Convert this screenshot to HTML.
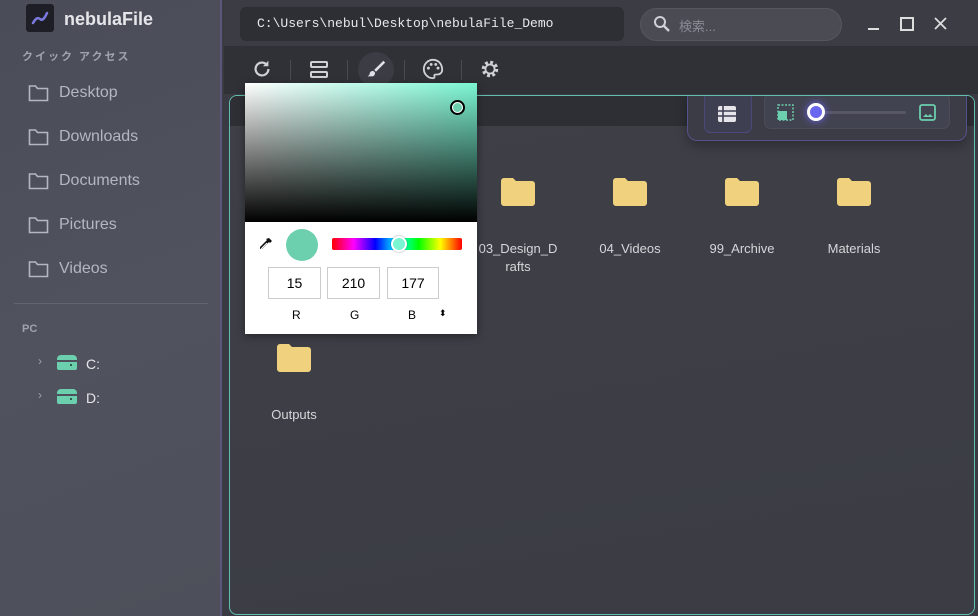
<!DOCTYPE html>
<html><head><meta charset="utf-8"><style>
*{margin:0;padding:0;box-sizing:border-box}
body{width:978px;height:616px;overflow:hidden;background:#3a3b42;font-family:"Liberation Sans","Noto Sans CJK JP",sans-serif;position:relative}
.abs{position:absolute}
#side{left:0;top:0;width:222px;height:616px;background:linear-gradient(160deg,#4a4c58,#50525e 50%,#4d4f5a);border-right:2px solid #5a587a}
.nav{left:28px;font-size:16px;color:#b4b6c0;display:flex;align-items:center;gap:10px}
.nav svg{width:21px;height:18px}
#top{left:224px;top:0;width:754px;height:46px;background:#3c3d44}
#tool{left:224px;top:46px;width:754px;height:48px;background:#303137}
#panel{left:229px;top:95px;width:746px;height:520px;border:1px solid #62bfae;border-radius:8px;background:linear-gradient(170deg,#3e3f47,#3c3d44);overflow:hidden}
.fold{position:absolute;width:112px;text-align:center;color:#d6d6da;font-size:13px;line-height:18px}
.fold svg{display:block;margin:0 auto 34px}
.tb{top:58px;width:22px;height:22px}
.sep{top:60px;width:1px;height:20px;background:#4a4b52}
</style></head><body>
<div id="side" class="abs">
 <div class="abs" style="left:26px;top:4px;width:28px;height:28px;background:#1e1f26;border-radius:3px">
  <svg width="28" height="28"><path d="M7 19 Q11 12 14 15 T21 9" stroke="#7b79e0" stroke-width="2.5" fill="none" stroke-linecap="round"/></svg></div>
 <div class="abs" style="left:64px;top:9px;font-size:18px;color:#e6e6ea;font-weight:bold">nebulaFile</div>
 <div class="abs" style="left:22px;top:48px;font-size:11px;color:#a0a2ac;font-weight:bold;letter-spacing:2px">クイック アクセス</div>
 <div class="abs nav" style="top:84px"><svg viewBox="0 0 21 18"><path d="M1.5 2h6l2 2.5h10v12h-18z" fill="none" stroke="#b4b6c0" stroke-width="1.6"/></svg>Desktop</div>
 <div class="abs nav" style="top:128px"><svg viewBox="0 0 21 18"><path d="M1.5 2h6l2 2.5h10v12h-18z" fill="none" stroke="#b4b6c0" stroke-width="1.6"/></svg>Downloads</div>
 <div class="abs nav" style="top:172px"><svg viewBox="0 0 21 18"><path d="M1.5 2h6l2 2.5h10v12h-18z" fill="none" stroke="#b4b6c0" stroke-width="1.6"/></svg>Documents</div>
 <div class="abs nav" style="top:216px"><svg viewBox="0 0 21 18"><path d="M1.5 2h6l2 2.5h10v12h-18z" fill="none" stroke="#b4b6c0" stroke-width="1.6"/></svg>Pictures</div>
 <div class="abs nav" style="top:260px"><svg viewBox="0 0 21 18"><path d="M1.5 2h6l2 2.5h10v12h-18z" fill="none" stroke="#b4b6c0" stroke-width="1.6"/></svg>Videos</div>
 <div class="abs" style="left:14px;top:303px;width:194px;height:1px;background:#62646e"></div>
 <div class="abs" style="left:22px;top:323px;font-size:11px;color:#a0a2ac;font-weight:bold">PC</div>
 <div class="abs" style="left:38px;top:354px;color:#a0a2ac;font-size:12px">›</div>
 <div class="abs" style="left:57px;top:355px;width:20px;height:15px;background:#6ccfae;border-radius:4px 4px 2px 2px"><div class="abs" style="left:0;top:5px;width:20px;height:1.5px;background:#4e505c"></div><div class="abs" style="left:13px;top:9px;width:2px;height:2px;background:#2e5c4e"></div></div>
 <div class="abs" style="left:86px;top:356px;color:#e6e6ea;font-size:14px">C:</div>
 <div class="abs" style="left:38px;top:388px;color:#a0a2ac;font-size:12px">›</div>
 <div class="abs" style="left:57px;top:389px;width:20px;height:15px;background:#6ccfae;border-radius:4px 4px 2px 2px"><div class="abs" style="left:0;top:5px;width:20px;height:1.5px;background:#4e505c"></div><div class="abs" style="left:13px;top:9px;width:2px;height:2px;background:#2e5c4e"></div></div>
 <div class="abs" style="left:86px;top:390px;color:#e6e6ea;font-size:14px">D:</div>
</div>
<div id="top" class="abs"></div>
<div class="abs" style="left:240px;top:7px;width:384px;height:34px;background:#2e2f35;border-radius:6px;color:#e8e8ec;font-family:'Liberation Mono',monospace;font-size:13px;padding:9px 0 0 17px">C:\Users\nebul\Desktop\nebulaFile_Demo</div>
<div class="abs" style="left:640px;top:8px;width:202px;height:33px;background:#4a4b53;border:1px solid #55565e;border-radius:17px"></div>
<svg class="abs" style="left:653px;top:15px" width="18" height="18"><circle cx="7" cy="7" r="5" stroke="#d0d0d6" stroke-width="2" fill="none"/><path d="M11 11l5 5" stroke="#d0d0d6" stroke-width="2.4"/></svg>
<div class="abs" style="left:679px;top:16px;font-size:13px;color:#8a8b94">検索...</div>
<div class="abs" style="left:868px;top:28px;width:11px;height:2px;background:#ddd"></div>
<div class="abs" style="left:900px;top:17px;width:14px;height:14px;border:2px solid #ddd"></div>
<svg class="abs" style="left:934px;top:17px" width="13" height="13"><path d="M1 1l11 11M12 1L1 12" stroke="#ddd" stroke-width="1.8"/></svg>
<div id="tool" class="abs"></div>
<svg class="abs tb" style="left:251px" viewBox="0 0 24 24"><path d="M19 12a7 7 0 1 1-2.1-5" stroke="#d0d0d6" stroke-width="2.4" fill="none"/><path d="M19 3v6h-6z" fill="#d0d0d6"/></svg>
<div class="abs sep" style="left:290px"></div>
<div class="abs" style="left:310px;top:61px;width:18px;height:7px;border:2px solid #d0d0d6;border-radius:2px"></div>
<div class="abs" style="left:310px;top:71px;width:18px;height:7px;border:2px solid #d0d0d6;border-radius:2px"></div>
<div class="abs sep" style="left:347px"></div>
<div class="abs" style="left:358px;top:52px;width:36px;height:36px;border-radius:18px;background:#3c3d44"></div>
<svg class="abs tb" style="left:365px" viewBox="0 0 24 24"><path d="M20 3L10 13l2 2L22 5z" fill="#e0e0e6"/><path d="M9 14c-3 0-4 2-4 4l-2 2h5c2 0 3-2 3-4z" fill="#e0e0e6"/></svg>
<div class="abs sep" style="left:404px"></div>
<svg class="abs tb" style="left:422px" viewBox="0 0 24 24"><path d="M12 2a10 10 0 0 0 0 20c1.5 0 2-1 1.5-2s0-2 1.5-2h2a5 5 0 0 0 5-5C22 6 17.5 2 12 2z" stroke="#d0d0d6" stroke-width="2" fill="none"/><circle cx="7" cy="11" r="1.6" fill="#d0d0d6"/><circle cx="10" cy="7" r="1.6" fill="#d0d0d6"/><circle cx="15" cy="7" r="1.6" fill="#d0d0d6"/><circle cx="17.5" cy="11" r="1.6" fill="#d0d0d6"/></svg>
<div class="abs sep" style="left:461px"></div>
<svg class="abs tb" style="left:479px" viewBox="0 0 24 24"><circle cx="12" cy="12" r="7" stroke="#d0d0d6" stroke-width="4" stroke-dasharray="3 2.5" fill="none"/><circle cx="12" cy="12" r="5" stroke="#d0d0d6" stroke-width="2" fill="none"/></svg>
<div id="panel" class="abs">
 <div class="abs" style="left:0;top:0;width:746px;height:30px;background:#2e2f35"></div>
 <div class="fold" style="left:232px;top:82px"><svg width="34" height="28"><path d="M0 3a3 3 0 0 1 3-3h9l3 3h16a3 3 0 0 1 3 3v19a3 3 0 0 1-3 3H3a3 3 0 0 1-3-3z" fill="#f0d27e"/></svg>03_Design_D<br>rafts</div>
 <div class="fold" style="left:344px;top:82px"><svg width="34" height="28"><path d="M0 3a3 3 0 0 1 3-3h9l3 3h16a3 3 0 0 1 3 3v19a3 3 0 0 1-3 3H3a3 3 0 0 1-3-3z" fill="#f0d27e"/></svg>04_Videos</div>
 <div class="fold" style="left:456px;top:82px"><svg width="34" height="28"><path d="M0 3a3 3 0 0 1 3-3h9l3 3h16a3 3 0 0 1 3 3v19a3 3 0 0 1-3 3H3a3 3 0 0 1-3-3z" fill="#f0d27e"/></svg>99_Archive</div>
 <div class="fold" style="left:568px;top:82px"><svg width="34" height="28"><path d="M0 3a3 3 0 0 1 3-3h9l3 3h16a3 3 0 0 1 3 3v19a3 3 0 0 1-3 3H3a3 3 0 0 1-3-3z" fill="#f0d27e"/></svg>Materials</div>
 <div class="fold" style="left:8px;top:248px"><svg width="34" height="28"><path d="M0 3a3 3 0 0 1 3-3h9l3 3h16a3 3 0 0 1 3 3v19a3 3 0 0 1-3 3H3a3 3 0 0 1-3-3z" fill="#f0d27e"/></svg>Outputs</div>
 <div class="abs" style="left:457px;top:-8px;width:280px;height:53px;background:#3b3c46;border:1px solid #54528a;border-radius:10px;box-shadow:0 4px 12px rgba(0,0,0,.3)">
  <div class="abs" style="left:16px;top:4px;width:48px;height:40px;background:#3f3f52;border:1px solid #4a4878;border-radius:6px"></div>
  <svg class="abs" style="left:29px;top:16px" width="20" height="18"><rect x="1" y="1" width="18" height="16" rx="2" fill="#e6e6ea"/><path d="M1 6h18M1 11h18M6 1v16" stroke="#3f3f52" stroke-width="1.6"/></svg>
  <div class="abs" style="left:76px;top:4px;width:186px;height:36px;background:#424350;border:1px solid #4c4d58;border-radius:7px"></div>
  <svg class="abs" style="left:89px;top:15px" width="17" height="17"><rect x="1" y="1" width="15" height="15" fill="none" stroke="#6ccfae" stroke-dasharray="2 1.5" stroke-width="1.5"/><rect x="1" y="7" width="9" height="9" fill="#6ccfae"/></svg>
  <div class="abs" style="left:130px;top:22px;width:88px;height:3px;background:#575864;border-radius:2px"></div>
  <div class="abs" style="left:119px;top:14px;width:18px;height:18px;border-radius:9px;background:#6a66f0;border:3px solid #fff;box-shadow:0 0 8px #6a66f0"></div>
  <svg class="abs" style="left:231px;top:15px" width="17" height="17"><rect x="1" y="1" width="15" height="15" rx="2" fill="none" stroke="#6ccfae" stroke-width="1.8"/><path d="M4 13l3-3 2 2 2-2 3 3z" fill="#6ccfae"/></svg>
 </div>
</div>
<div class="abs" style="left:245px;top:83px;width:232px;height:251px;background:#fff;box-shadow:0 2px 8px rgba(0,0,0,.4)">
 <div class="abs" style="left:0;top:0;width:232px;height:139px;background:linear-gradient(to top,#000,transparent),linear-gradient(to right,#fff,#7af5d2)"></div>
 <div class="abs" style="left:205px;top:17px;width:15px;height:15px;border-radius:8px;border:2px solid #000;background:#6ccfae;box-shadow:0 0 0 1px #fff inset"></div>
 <svg class="abs" style="left:13px;top:153px" width="16" height="16"><path d="M11 2l3 3-2 2-1-1-7 7H2v-2l7-7-1-1z" fill="#111"/><path d="M3 13l6-6" stroke="#fff" stroke-width="1"/></svg>
 <div class="abs" style="left:41px;top:146px;width:32px;height:32px;border-radius:16px;background:#6ccfae"></div>
 <div class="abs" style="left:87px;top:155px;width:130px;height:12px;border-radius:2px;background:linear-gradient(to right,#f00,#f0f,#00f,#0ff,#0f0,#ff0,#f00)"></div>
 <div class="abs" style="left:146px;top:153px;width:16px;height:16px;border-radius:8px;background:#7af5d2;border:2px solid #fff;box-shadow:0 0 2px rgba(0,0,0,.4)"></div>
 <div class="abs" style="left:23px;top:184px;width:53px;height:32px;border:1px solid #ccc;font-size:14px;text-align:center;line-height:30px">15</div>
 <div class="abs" style="left:82px;top:184px;width:53px;height:32px;border:1px solid #ccc;font-size:14px;text-align:center;line-height:30px">210</div>
 <div class="abs" style="left:142px;top:184px;width:52px;height:32px;border:1px solid #ccc;font-size:14px;text-align:center;line-height:30px">177</div>
 <div class="abs" style="left:47px;top:225px;font-size:12px">R</div>
 <div class="abs" style="left:105px;top:225px;font-size:12px">G</div>
 <div class="abs" style="left:163px;top:225px;font-size:12px">B</div>
 <div class="abs" style="left:194px;top:225px;font-size:9px">⬍</div>
</div>
</body></html>
